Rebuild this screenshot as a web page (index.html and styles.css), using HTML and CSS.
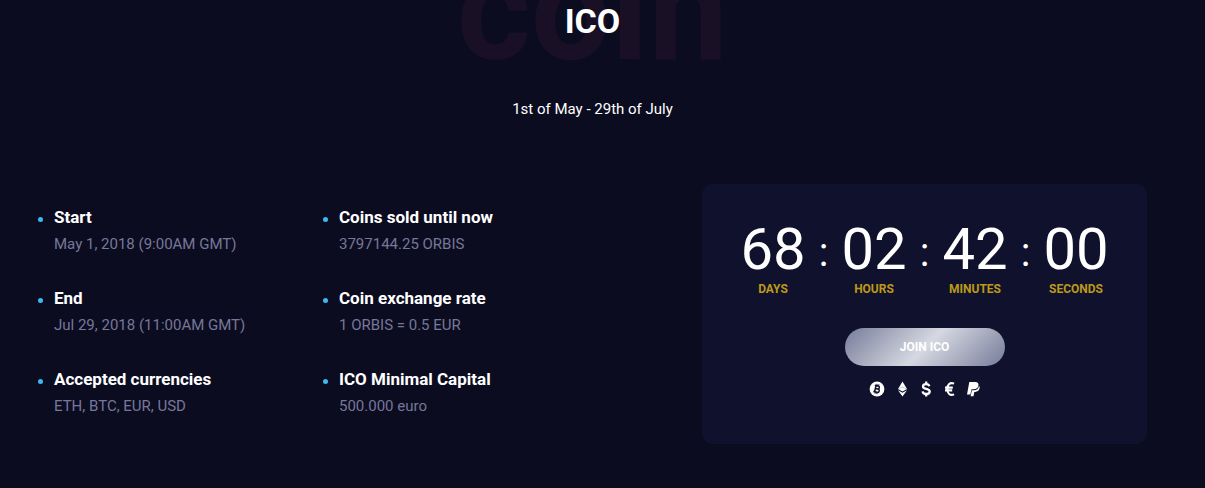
FILE: index.html
```html
<!DOCTYPE html>
<html lang="en">
<head>
<meta charset="utf-8">
<meta name="viewport" content="width=device-width, initial-scale=1">
<title>ICO</title>
<link rel="stylesheet" href="styles.css">
</head>
<body>
<main class="section">
  <header class="heading">
    <span class="watermark" aria-hidden="true">coin</span>
    <h1 class="title">ICO</h1>
    <p class="dates">1st of May - 29th of July</p>
  </header>
  <div class="columns">
    <ul class="facts">
      <li class="fact"><strong class="fact-name">Start</strong><span class="fact-value">May 1, 2018 (9:00AM GMT)</span></li>
      <li class="fact"><strong class="fact-name">End</strong><span class="fact-value">Jul 29, 2018 (11:00AM GMT)</span></li>
      <li class="fact"><strong class="fact-name">Accepted currencies</strong><span class="fact-value">ETH, BTC, EUR, USD</span></li>
    </ul>
    <ul class="facts">
      <li class="fact"><strong class="fact-name">Coins sold until now</strong><span class="fact-value">3797144.25 ORBIS</span></li>
      <li class="fact"><strong class="fact-name">Coin exchange rate</strong><span class="fact-value">1 ORBIS = 0.5 EUR</span></li>
      <li class="fact"><strong class="fact-name">ICO Minimal Capital</strong><span class="fact-value">500.000 euro</span></li>
    </ul>
    <section class="card">
      <div class="countdown">
        <div class="unit"><span class="number">68</span><span class="label">DAYS</span></div>
        <span class="colon">:</span>
        <div class="unit"><span class="number">02</span><span class="label">HOURS</span></div>
        <span class="colon">:</span>
        <div class="unit"><span class="number">42</span><span class="label">MINUTES</span></div>
        <span class="colon">:</span>
        <div class="unit"><span class="number">00</span><span class="label">SECONDS</span></div>
      </div>
      <button class="join" type="button">JOIN ICO</button>
      <div class="currencies">
        <svg class="icon" viewBox="0 0 16 16" role="img" aria-label="Bitcoin"><circle cx="8" cy="8" r="7.4" fill="#fff"/><g transform="rotate(13 8 8)" fill="none" stroke="#10112c" stroke-width="1.5"><path d="M5 4.8h3.5a1.5 1.5 0 0 1 0 3H6.3M6.3 4.8v6.4M6.3 7.9h2.6a1.6 1.6 0 0 1 0 3.3H5"/><path stroke-width="1" d="M7 3v2M8.9 3v2M7 11v2M8.9 11v2"/></g></svg>
        <svg class="icon" viewBox="0 0 16 16" role="img" aria-label="Ethereum"><path fill="#fff" d="M9.500 .4 14 8 9.500 10.600 5 8zM5 9.200 9.500 11.800 14 9.200 9.500 15.600z"/><path d="M5.400 7.900 9.500 6.100l4.100 1.800" fill="none" stroke="#8d8fa5" stroke-width=".5"/></svg>
        <svg class="icon" viewBox="0 0 16 16" role="img" aria-label="Dollar"><path d="M12.300 5.300C12 3.900 10.900 3.200 9.200 3.200c-1.800 0-3.200.8-3.200 2.200 0 3.300 6.700 1.700 6.700 5 0 1.500-1.400 2.500-3.400 2.500-2.200 0-3.500-.9-3.700-2.600M9.200 .500v2.800M9.200 12.600v2.800" fill="none" stroke="#fff" stroke-width="2.300"/></svg>
        <svg class="icon" viewBox="0 0 16 16" role="img" aria-label="Euro"><path d="M13.100 2.600C9 .9 6.300 3.600 6.300 8s2.700 7.100 6.800 5.400M4 6.600h7.800M4 9.400h7.200" fill="none" stroke="#fff" stroke-width="2.100"/></svg>
        <svg class="icon" viewBox="0 0 16 16" role="img" aria-label="PayPal"><path fill="#fff" d="M4.300 1h5.800c2.600 0 3.800 1.300 3.300 3.600-.5 2.600-2.200 3.700-4.700 3.700H6.500L5.400 13.400H2z"/><path fill="#fff" d="M14 4.700c.7.800.8 1.800.5 2.900-.5 2.300-2.100 3.300-4.300 3.300H9.300L8.500 15.300H5.600l1.300-6.100h2c2.700 0 4.600-1.500 5.100-4.500z"/></svg>
      </div>
    </section>
  </div>
</main>
</body>
</html>
```
FILE: styles.css
```css
* { box-sizing: border-box; }

body {
  margin: 0;
  min-height: 100vh;
  background: #0b0c20;
  color: #fff;
  font-family: Roboto, "Liberation Sans", sans-serif;
  font-size: 15px;
  line-height: 27px;
}

.section { padding: 0 58px 44px 38px; overflow: hidden; }

.heading {
  position: relative;
  text-align: center;
  padding-bottom: 61px;
}

.watermark {
  position: absolute;
  left: 0;
  right: 0;
  top: -69px;
  color: #1a1026;
  font-size: 142px;
  font-weight: 700;
  line-height: 160px;
}

.title {
  position: relative;
  margin: 0;
  font-size: 34px;
  font-weight: 700;
  line-height: 42px;
}

.dates { position: relative; margin: 54px 0 0; }

.columns {
  display: grid;
  grid-template-columns: 285fr 379fr 445fr;
  align-items: start;
}

.facts {
  display: grid;
  gap: 27px;
  margin: 0;
  padding: 20px 0 0;
  list-style: none;
}

.fact {
  display: grid;
  grid-template-columns: 5px 1fr;
  column-gap: 11px;
  align-items: center;
}

.fact::before {
  content: "";
  width: 5px;
  height: 5px;
  margin-top: 4px;
  border-radius: 50%;
  background: #41b6f2;
}

.fact-name { font-size: 17px; font-weight: 700; }
.fact-value { grid-column: 2; color: #77779a; }

.card {
  display: flex;
  flex-direction: column;
  align-items: center;
  padding: 34px 20px 47px;
  border-radius: 11px;
  background: #10112c;
}

.countdown { display: flex; }

.unit {
  display: flex;
  flex-direction: column;
  align-items: center;
  width: 72px;
}

.number { font-size: 58px; font-weight: 400; line-height: 62px; }
.label { color: #bd9918; font-size: 12px; font-weight: 700; line-height: 18px; }

.colon {
  width: 29px;
  text-align: center;
  font-size: 40px;
  line-height: 70px;
}

.join {
  width: 160px;
  height: 38px;
  margin-top: 30px;
  padding: 0;
  border: 0;
  border-radius: 19px;
  background: linear-gradient(135deg, #757c99 0%, #d6d8e1 50%, #757c99 100%);
  color: #fff;
  font: inherit;
  font-size: 12px;
  font-weight: 700;
}

.currencies { display: flex; gap: 8px; margin-top: 15px; }
.icon { width: 16px; height: 16px; }
```
